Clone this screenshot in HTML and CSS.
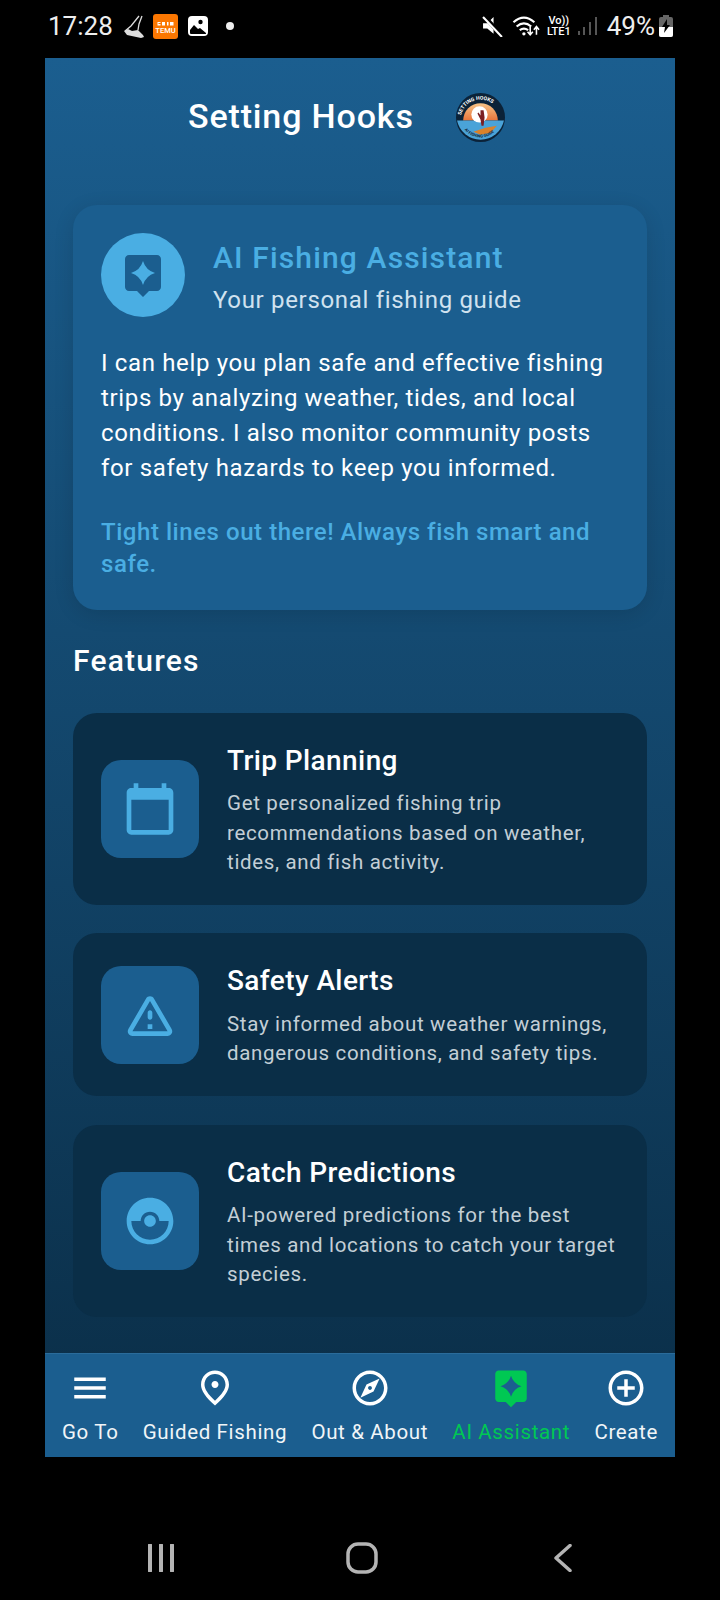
FILE: index.html
```html
<!DOCTYPE html>
<html lang="en">
<head>
  <meta charset="UTF-8" />
  <meta name="viewport" content="width=device-width, initial-scale=1.0"/>
  <title>Setting Hooks - AI Assistant</title>
  <link rel="stylesheet" href="styles.css">
</head>
<body>
  <div class="status-bar">
    <div class="status-left">
      <span class="clock">17:28</span>
      <svg class="shoe" viewBox="0 0 22 23"><path d="M16 1L8 11 2 16" fill="none" stroke="#ddd" stroke-width="1.300"/><path d="M19 1l-3 8-1 6" fill="none" stroke="#ddd" stroke-width="1.300"/><path d="M1 16l4-2 4 2 6-1 5 5 1 2-3 1L4 20z" fill="#ddd"/></svg>
      <svg class="temu" viewBox="0 0 25 25">
        <rect width="25" height="25" rx="3" fill="#fb7701"/>
        <path d="M4.500 8h3v1h-2v1h2v1.500h-3zM9 8h3v3.500H9zM14 8h1.500v3.500H14zM17 8h3.500v3.500H17z" fill="#fff"/>
        <text x="12.500" y="18.800" text-anchor="middle" class="temu-text">TEMU</text>
      </svg>
      <svg class="gallery" viewBox="0 0 20 20"><rect width="20" height="20" rx="4" fill="#fff"/><circle cx="12.500" cy="6" r="2.200" fill="#000"/><path d="M2 17v-3l4-5 4 4 2-1 6 5v0.500q0 0.500-1 0.500H3q-1 0-1-1z" fill="#000"/></svg>
      <span class="dot"></span>
    </div>
    <div class="status-right">
      <svg class="mute" viewBox="0 0 20 20"><path d="M1 7h4l6-6v16l-6-5H1z" fill="#fff"/><path d="M2 0l18 20" stroke="#000" stroke-width="4"/><path d="M1 1l18 19" stroke="#fff" stroke-width="2"/></svg>
      <svg class="wifi" viewBox="0 0 26 22"><path d="M1 7q10-9 20 0M4 11q7-6 14 0M7 14.500q4-3 8 0" fill="none" stroke="#fff" stroke-width="2"/><circle cx="11" cy="18" r="1.600" fill="#fff"/><path d="M17 11v7M14.500 16l2.500 3 2.500-3M23 19v-7M20.500 14l2.500-3 2.500 3" fill="none" stroke="#fff" stroke-width="1.500"/></svg>
      <div class="volte"><span>Vo))</span><span>LTE1</span></div>
      <svg class="signal" viewBox="0 0 19 20"><rect x="0" y="15" width="2" height="4" fill="#555"/><rect x="5" y="11" width="2" height="8" fill="#555"/><rect x="11" y="6" width="2" height="13" fill="#555"/><rect x="17" y="1" width="2" height="18" fill="#555"/></svg>
      <span class="battery-text">49%</span>
      <svg class="battery" viewBox="0 0 14 22"><path d="M4 0h6v2h2q2 0 2 2v16q0 2-2 2H2q-2 0-2-2V4q0-2 2-2h2z" fill="#666"/><path d="M0 12h14v8q0 2-2 2H2q-2 0-2-2z" fill="#fff"/><path d="M8 4L3 12h3l-1 6 6-8H8z" fill="#000"/></svg>
    </div>
  </div>

  <div class="app">
    <header class="app-header">
      <h1>Setting Hooks</h1>
      <svg class="logo" viewBox="0 0 48 48">
        <defs>
          <linearGradient id="sunset" x1="0" y1="0" x2="0" y2="1">
            <stop offset="0" stop-color="#f6c487"/>
            <stop offset="1" stop-color="#e9743a"/>
          </linearGradient>
          <path id="logoArc" d="M4.500 26a19.500 19.500 0 0 1 39 0"/>
          <path id="logoArcLow" d="M7 34a20 20 0 0 0 34 0"/>
        </defs>
        <circle cx="24" cy="24" r="24" fill="#0b2238"/>
        <path d="M7 27a17 17 0 1 1 34 0z" fill="url(#sunset)"/>
        <path d="M1 27h46a23.500 23.500 0 0 1-46 0z" fill="#4aa3d8"/>
        <circle cx="23" cy="21" r="8" fill="#fff"/>
        <path d="M24 17h3l1 7-1 8h-2l-1-6-3-6 1-1 2 3z" fill="#7a1f22"/>
        <path d="M17 38l12-4 11-2-6 7-10 2z" fill="#d9822b"/>
        <text class="logo-text"><textPath href="#logoArc" startOffset="7%">SETTING HOOKS</textPath></text>
        <text class="logo-text-low"><textPath href="#logoArcLow" startOffset="6%">AI FISHING GUIDE</textPath></text>
      </svg>
    </header>

    <main class="content">
      <section class="intro-card">
        <div class="intro-head">
          <div class="intro-icon">
            <svg viewBox="0 0 24 24"><path d="M5 2h14c1.100 0 2 .9 2 2v14c0 1.100-.9 2-2 2h-4l-3 3-3-3H5c-1.100 0-2-.9-2-2V4c0-1.100.9-2 2-2zM12 5Q10.600 9.600 6 11 10.600 12.400 12 17 13.400 12.400 18 11 13.400 9.600 12 5z"/></svg>
          </div>
          <div class="intro-titles">
            <h2>AI Fishing Assistant</h2>
            <p class="intro-sub">Your personal fishing guide</p>
          </div>
        </div>
        <p class="intro-body">I can help you plan safe and effective fishing trips by analyzing weather, tides, and local conditions. I also monitor community posts for safety hazards to keep you informed.</p>
        <p class="intro-tip">Tight lines out there! Always fish smart and safe.</p>
      </section>

      <h3 class="section-title">Features</h3>

      <section class="feature-card">
        <div class="feature-icon">
          <svg viewBox="0 0 24 24"><path d="M20 3h-1V1h-2v2H7V1H5v2H4c-1.100 0-2 .9-2 2v16c0 1.100.9 2 2 2h16c1.100 0 2-.9 2-2V5c0-1.100-.9-2-2-2zm0 18H4V8h16v13z"/></svg>
        </div>
        <div class="feature-text">
          <h4>Trip Planning</h4>
          <p>Get personalized fishing trip recommendations based on weather, tides, and fish activity.</p>
        </div>
      </section>

      <section class="feature-card">
        <div class="feature-icon">
          <svg viewBox="0 0 24 24"><path d="M12 5.990L19.530 19H4.470L12 5.990M2.740 18c-.77 1.330.19 3 1.730 3h15.060c1.540 0 2.500-1.670 1.730-3L13.730 4.990c-.77-1.330-2.690-1.330-3.460 0L2.740 18zM11 11v2c0 .55.45 1 1 1s1-.45 1-1v-2c0-.55-.45-1-1-1s-1 .45-1 1zm0 5h2v2h-2v-2z"/></svg>
        </div>
        <div class="feature-text">
          <h4>Safety Alerts</h4>
          <p>Stay informed about weather warnings, dangerous conditions, and safety tips.</p>
        </div>
      </section>

      <section class="feature-card">
        <div class="feature-icon">
          <svg viewBox="0 0 24 24"><path d="M14.500 12c0 1.380-1.120 2.500-2.500 2.500S9.500 13.380 9.500 12s1.120-2.500 2.500-2.500 2.500 1.120 2.500 2.500zM22 12c0 5.520-4.480 10-10 10S2 17.520 2 12 6.480 2 12 2s10 4.480 10 10zm-2 0h-4c0-2.210-1.790-4-4-4s-4 1.790-4 4H4c0 4.410 3.590 8 8 8s8-3.590 8-8z"/></svg>
        </div>
        <div class="feature-text">
          <h4>Catch Predictions</h4>
          <p>AI-powered predictions for the best times and locations to catch your target species.</p>
        </div>
      </section>
    </main>

    <nav class="tab-bar">
      <div class="tab">
        <svg viewBox="0 0 24 24"><path d="M3 18h18v-2H3v2zm0-5h18v-2H3v2zm0-7v2h18V6H3z"/></svg>
        <span>Go To</span>
      </div>
      <div class="tab">
        <svg viewBox="0 0 24 24"><path d="M12 12c-1.100 0-2-.9-2-2s.9-2 2-2 2 .9 2 2-.9 2-2 2zm6-1.800C18 6.570 15.350 4 12 4s-6 2.570-6 6.200c0 2.340 1.950 5.440 6 9.140 4.050-3.700 6-6.800 6-9.140zM12 2c4.200 0 8 3.220 8 8.200 0 3.320-2.670 7.250-8 11.800-5.330-4.550-8-8.480-8-11.800C4 5.220 7.800 2 12 2z"/></svg>
        <span>Guided Fishing</span>
      </div>
      <div class="tab">
        <svg viewBox="0 0 24 24"><path d="M12 2C6.480 2 2 6.480 2 12s4.480 10 10 10 10-4.480 10-10S17.520 2 12 2zm0 18c-4.410 0-8-3.590-8-8s3.590-8 8-8 8 3.590 8 8-3.590 8-8 8zm-5.500-2.500l7.510-3.490L17.500 6.500 9.990 9.990 6.500 17.500zm5.500-6.600c.61 0 1.100.49 1.100 1.100s-.49 1.100-1.100 1.100-1.100-.49-1.100-1.100.49-1.100 1.100-1.100z"/></svg>
        <span>Out &amp; About</span>
      </div>
      <div class="tab active">
        <svg viewBox="0 0 24 24"><path d="M5 2h14c1.100 0 2 .9 2 2v14c0 1.100-.9 2-2 2h-4l-3 3-3-3H5c-1.100 0-2-.9-2-2V4c0-1.100.9-2 2-2zM12 5Q10.600 9.600 6 11 10.600 12.400 12 17 13.400 12.400 18 11 13.400 9.600 12 5z"/></svg>
        <span>AI Assistant</span>
      </div>
      <div class="tab">
        <svg viewBox="0 0 24 24"><path d="M13 7h-2v4H7v2h4v4h2v-4h4v-2h-4V7zm-1-5C6.480 2 2 6.480 2 12s4.480 10 10 10 10-4.480 10-10S17.520 2 12 2zm0 18c-4.410 0-8-3.590-8-8s3.590-8 8-8 8 3.590 8 8-3.590 8-8 8z"/></svg>
        <span>Create</span>
      </div>
    </nav>
  </div>

  <div class="system-nav">
    <svg class="sys-recents" viewBox="0 0 26 28"><path d="M2 1v26M13 1v26M24 1v26"/></svg>
    <svg class="sys-home" viewBox="0 0 32 32"><rect x="2" y="2" width="28" height="28" rx="10"/></svg>
    <svg class="sys-back" viewBox="0 0 18 28"><path d="M16 1.500L2 14l14 12.500"/></svg>
  </div>
</body>
</html>
```

FILE: styles.css
```css
* {
  box-sizing: border-box;
}

body {
  margin: 0;
  width: 720px;
  height: 1600px;
  background: #000;
  font-family: Roboto, "Liberation Sans", sans-serif;
  color: #fff;
  display: flex;
  flex-direction: column;
  overflow: hidden;
}

h1, h2, h3, h4, p {
  margin: 0;
}

/* phone status bar */
.status-bar {
  height: 58px;
  flex: none;
  display: flex;
  justify-content: space-between;
  align-items: center;
  padding: 0 47px 6px 48px;
}

.status-left, .status-right {
  display: flex;
  align-items: center;
}

.clock {
  font-size: 26px;
  margin-right: 10px;
  color: #eee;
}

.shoe { width: 22px; height: 23px; margin-right: 8px; }
.temu { width: 25px; height: 25px; margin-right: 10px; }
.gallery { width: 20px; height: 20px; margin-right: 18px; }

.temu-text {
  font-size: 7.500px;
  font-weight: 500;
  fill: #fff;
  font-family: Roboto, sans-serif;
}

.dot {
  width: 8px;
  height: 8px;
  border-radius: 50%;
  background: #eee;
}

.mute { width: 21px; height: 21px; margin-right: 9px; }
.wifi { width: 28px; height: 23px; margin-right: 7px; }
.signal { width: 19px; height: 20px; margin: 0 10px 0 7px; }
.battery { width: 14px; height: 22px; margin-left: 4px; }

.volte {
  display: flex;
  flex-direction: column;
  align-items: center;
  font-size: 11px;
  font-weight: 500;
  line-height: 11px;
}

.battery-text {
  font-size: 26px;
  color: #eee;
}

/* app frame */
.app {
  margin: 0 45px;
  height: 1399px;
  flex: none;
  display: flex;
  flex-direction: column;
  background: linear-gradient(#1b5e8f, #0a2d46);
}

.app-header {
  height: 118px;
  flex: none;
  display: flex;
  align-items: center;
  gap: 42px;
  padding-left: 143px;
}

.app-header h1 {
  font-size: 34px;
  font-weight: 500;
  letter-spacing: 0.85px;
  margin-top: -2px;
}

.logo {
  width: 49px;
  height: 49px;
}

.logo-text {
  font-size: 5px;
  font-weight: 700;
  fill: #fff;
  font-family: Roboto, sans-serif;
}

.logo-text-low {
  font-size: 4px;
  font-weight: 700;
  fill: #123;
  font-family: Roboto, sans-serif;
}

.content {
  flex: 1;
  padding: 29px 28px 0;
}

.intro-card {
  background: #1b5e8f;
  border-radius: 24px;
  padding: 28px;
  box-shadow: 0 4px 20px rgba(0, 0, 0, 0.12);
}

.intro-head {
  display: flex;
  align-items: center;
  gap: 28px;
  margin-bottom: 29px;
}

.intro-titles {
  padding-top: 5px;
}

.intro-icon {
  width: 84px;
  height: 84px;
  border-radius: 50%;
  background: #4aaee3;
  display: flex;
  align-items: center;
  justify-content: center;
}

.intro-icon svg {
  width: 48px;
  height: 48px;
  fill: #1b5e8f;
  fill-rule: evenodd;
}

.intro-head h2 {
  font-size: 30px;
  font-weight: 500;
  line-height: 36px;
  letter-spacing: 1.15px;
  color: #4aaee3;
  margin-bottom: 8px;
}

.intro-sub {
  font-size: 24px;
  line-height: 32px;
  letter-spacing: 0.68px;
  color: #d0e2ef;
}

.intro-body {
  font-size: 24px;
  line-height: 34.9px;
  letter-spacing: 0.65px;
  margin-bottom: 30px;
}

.intro-tip {
  font-size: 24px;
  font-weight: 500;
  line-height: 32.6px;
  letter-spacing: 0.55px;
  color: #4aaee3;
  margin-bottom: 1px;
}

.section-title {
  font-size: 30px;
  font-weight: 500;
  line-height: 36px;
  margin: 33px 0 34px;
  letter-spacing: 1.2px;
}

.feature-card {
  background: #0a2e47;
  border-radius: 24px;
  padding: 28px;
  display: flex;
  align-items: center;
  gap: 28px;
  margin-bottom: 28.6px;
}

.feature-icon {
  width: 98px;
  height: 98px;
  flex: none;
  border-radius: 20px;
  background: #1b5e8f;
  display: flex;
  align-items: center;
  justify-content: center;
}

.feature-icon svg {
  width: 56px;
  height: 56px;
  fill: #4aaee3;
}

.feature-text {
  margin-bottom: -1px;
  padding-top: 1px;
}

.feature-card h4 {
  font-size: 28px;
  font-weight: 500;
  line-height: 38px;
  letter-spacing: 0.4px;
  margin-bottom: 9.5px;
}

.feature-card p {
  font-size: 20.500px;
  line-height: 29.5px;
  letter-spacing: 0.67px;
  color: #c3ced6;
}

/* bottom tabs */
.tab-bar {
  height: 104px;
  flex: none;
  display: flex;
  justify-content: space-between;
  padding: 13px 17px 0;
  background: #1b5e8f;
  border-top: 1px solid #2a6c9b;
}

.tab {
  display: flex;
  flex-direction: column;
  align-items: center;
  font-size: 20.500px;
  letter-spacing: 0.65px;
  color: #f0f5f8;
}

.tab svg {
  width: 42px;
  height: 42px;
  fill: #fff;
  fill-rule: evenodd;
  margin-bottom: 11px;
}

.tab.active {
  color: #00c853;
}

.tab.active svg {
  fill: #00c853;
}

/* android buttons */
.system-nav {
  flex: 1;
  display: grid;
  grid-template-columns: repeat(3, 1fr);
  align-items: center;
  justify-items: center;
  padding: 58px 57px 0 61px;
}

.system-nav svg {
  fill: none;
  stroke: #b4b4b4;
  stroke-linecap: round;
  stroke-linejoin: round;
}

.sys-recents { width: 26px; height: 28px; stroke-width: 4; }
.sys-home { width: 32px; height: 32px; stroke-width: 3.500; }
.sys-back { width: 18px; height: 28px; stroke-width: 3.500; }
```
